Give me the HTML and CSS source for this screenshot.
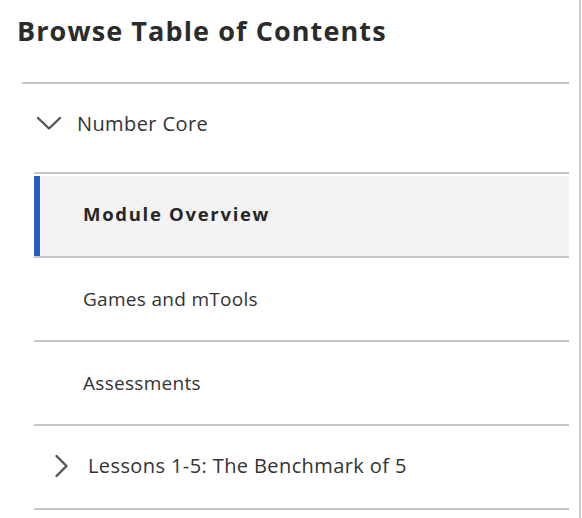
FILE: index.html
```html
<!DOCTYPE html>
<html>
<head>
<meta charset="utf-8">
<link rel="stylesheet" href="styles.css">
</head>
<body>
<div class="page">
  <div class="panel">
    <h1 class="title">Browse Table of Contents</h1>
    <nav class="toc">
      <div class="section">
        <div class="section-head">
          <svg class="chev-down" width="26" height="15" viewBox="0 0 26 15"><path d="M2 2 L13 12.5 L24 2" fill="none" stroke="#555" stroke-width="2.4" stroke-linecap="round" stroke-linejoin="round"/></svg>
          <span class="section-label">Number Core</span>
        </div>
        <ul class="items">
          <li class="item active"><span class="item-inner">Module Overview</span></li>
          <li class="item"><span class="item-inner">Games and mTools</span></li>
          <li class="item"><span class="item-inner">Assessments</span></li>
          <li class="item sub">
            <span class="sub-inner">
              <svg class="chev-right" width="15" height="24" viewBox="0 0 15 24"><path d="M2.5 2 L12.5 12 L2.5 22" fill="none" stroke="#555" stroke-width="2.4" stroke-linecap="round" stroke-linejoin="round"/></svg>
              <span class="section-label">Lessons 1-5: The Benchmark of 5</span>
            </span>
          </li>
        </ul>
      </div>
    </nav>
  </div>
  <div class="edge"></div>
</div>
</body>
</html>
```
FILE: styles.css
```css
html, body {
  margin: 0;
  padding: 0;
  background: #fff;
}
body {
  font-family: "Open Sans", "Lato", sans-serif;
  color: #333;
}
.page {
  display: flex;
  width: 582px;
  height: 518px;
  overflow: hidden;
}
.panel {
  width: 569px;
  flex: none;
}
.edge {
  width: 2px;
  margin-left: 10px;
  background: #c9cbcd;
  height: 518px;
  flex: none;
}
.title {
  margin: 0;
  padding: 14px 0 0 17px;
  height: 68px;
  box-sizing: border-box;
  font-size: 27px;
  font-weight: 700;
  color: #2b2b2b;
  letter-spacing: 1.1px;
  line-height: 34px;
  white-space: nowrap;
}
.toc {
  margin-left: 22px;
  border-top: 2px solid #c4c7ca;
  margin-top: 14px;
}
.section-head {
  display: flex;
  align-items: center;
  height: 88px;
  box-sizing: border-box;
  padding: 0 0 9px 14px;
  gap: 15px;
}
.section-label {
  font-size: 20px;
  color: #333;
  letter-spacing: 0.4px;
  white-space: nowrap;
}
.items {
  list-style: none;
  margin: 0 0 0 12px;
  padding: 0;
}
.item {
  border-top: 2px solid #c4c7ca;
  height: 82px;
  display: flex;
}
.item:last-child {
  border-bottom: 2px solid #c4c7ca;
}
.item-inner {
  display: flex;
  align-items: center;
  flex: 1;
  padding-left: 49px;
  padding-bottom: 1px;
  font-size: 19px;
  color: #333;
  letter-spacing: 0.3px;
}
.active .item-inner {
  background: #f3f3f3;
  border-left: 6px solid #2a5cbf;
  padding-left: 43px;
  padding-bottom: 5px;
  margin-top: 2px;
  font-size: 18.5px;
  font-weight: 700;
  color: #262626;
  letter-spacing: 1.7px;
}
.sub-inner {
  display: flex;
  align-items: center;
  padding-left: 20px;
  padding-bottom: 3px;
  gap: 19px;
}
```
